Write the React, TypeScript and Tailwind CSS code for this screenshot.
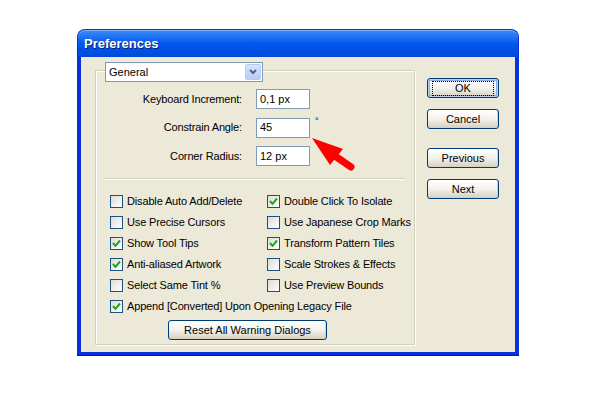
const font = { fontFamily: '"Liberation Sans", Arial, sans-serif' };

function XpButton({ label, isDefault = false, width = "w-[72px]" }: { label: string; isDefault?: boolean; width?: string }) {
  return (
    <div
      className={`${width} h-[20px] rounded-[3px] border border-[#003C74] bg-gradient-to-b from-[#FFFFFF] via-[#F3F2EC] to-[#D6D0C5] flex items-center justify-center text-[11px] text-black ${
        isDefault ? "shadow-[inset_0_0_0_1px_#B8D0F8,inset_0_0_0_2px_#89ADE4]" : "shadow-[inset_-1px_-1px_0_#D8D2BD]"
      }`}
    >
      {isDefault ? (
        <span className="px-[22px] leading-[13px] outline outline-1 outline-dotted outline-black">{label}</span>
      ) : (
        <span>{label}</span>
      )}
    </div>
  );
}

function Checkbox({ checked, label }: { checked: boolean; label: string }) {
  return (
    <div className="flex items-center h-[21px]">
      <div className="w-[13px] h-[13px] border border-[#1C5180] bg-gradient-to-br from-[#DCDCD7] to-[#FFFFFF] flex items-center justify-center shrink-0">
        {checked && (
          <svg width="9" height="9" viewBox="0 0 9 9">
            <polyline points="1,4 3.5,6.8 8,1.5" fill="none" stroke="#21A121" strokeWidth="2" />
          </svg>
        )}
      </div>
      <span className="ml-[4px] text-[11px] tracking-[-0.15px] text-black whitespace-nowrap">{label}</span>
    </div>
  );
}

function Field({ label, value, suffix }: { label: string; value: string; suffix?: string }) {
  return (
    <div className="flex items-center h-[20px]">
      <div className="w-[146px] text-right text-[11px] tracking-[-0.15px] text-black">{label}</div>
      <div className="ml-[14px] w-[54px] h-[20px] border border-[#7F9DB9] bg-white flex items-center pl-[3px] text-[11px] text-black">
        {value}
      </div>
      {suffix && <span className="ml-[5px] self-start -mt-[3px] text-[9px] text-black">{suffix}</span>}
    </div>
  );
}

export default function App() {
  const left = [
    { label: "Disable Auto Add/Delete", checked: false },
    { label: "Use Precise Cursors", checked: false },
    { label: "Show Tool Tips", checked: true },
    { label: "Anti-aliased Artwork", checked: true },
    { label: "Select Same Tint %", checked: false },
  ];
  const right = [
    { label: "Double Click To Isolate", checked: true },
    { label: "Use Japanese Crop Marks", checked: false },
    { label: "Transform Pattern Tiles", checked: true },
    { label: "Scale Strokes & Effects", checked: false },
    { label: "Use Preview Bounds", checked: false },
  ];

  return (
    <div className="relative w-[600px] h-[400px] bg-white pl-[77px] pt-[29px]" style={font}>
      <div className="w-[442px] h-[326px] flex flex-col">
        {/* title bar */}
        <div className="h-[28px] rounded-t-[8px] bg-gradient-to-b from-[#3B8CF8] via-[#0058EE] to-[#0049DA] border border-b-0 border-[#0831D9] flex items-center pl-[6px] shadow-[inset_0_1px_0_#7FB4FF]">
          <span className="text-white font-bold text-[13px] [text-shadow:1px_1px_0_#0A246A]">Preferences</span>
        </div>

        {/* body */}
        <div className="flex-1 flex bg-[#ECE9D8] border-l-[4px] border-r-[4px] border-b-[3px] border-[#0831D9] shadow-[0_1px_0_#001EA0]">
          <div className="ml-[14px] mt-[13px] w-[320px] h-[275px] border border-[#D0D0BF] shadow-[inset_1px_1px_0_#FFFFFF,1px_1px_0_#FFFFFF] flex flex-col">
            {/* dropdown */}
            <div className="ml-[9px] -mt-[9px] w-[158px] h-[20px] border border-[#7F9DB9] bg-white flex items-center">
              <span className="flex-1 pl-[3px] text-[11px] text-black">General</span>
              <div className="w-[16px] h-[16px] mr-[1px] rounded-[2px] bg-gradient-to-b from-[#D8E4FD] to-[#B5CBF7] border border-[#B9CAF0] flex items-center justify-center">
                <svg width="8" height="6" viewBox="0 0 8 6">
                  <polyline points="1,1 4,4 7,1" fill="none" stroke="#4D6185" strokeWidth="2" />
                </svg>
              </div>
            </div>

            <div className="mt-[7px] flex flex-col gap-[8.5px]">
              <Field label="Keyboard Increment:" value="0,1 px" />
              <Field label="Constrain Angle:" value="45" suffix="°" />
              <Field label="Corner Radius:" value="12 px" />
            </div>

            <div className="mt-[12px] ml-[9px] w-[299px] h-[2px] border-t border-[#D0D0BF] border-b border-b-white" />

            <div className="mt-[10.5px] ml-[14px] grid grid-cols-[157px_1fr]">
              {left.map((item, i) => (
                <>
                  <Checkbox key={`l${i}`} checked={item.checked} label={item.label} />
                  <Checkbox key={`r${i}`} checked={right[i].checked} label={right[i].label} />
                </>
              ))}
              <div className="col-span-2">
                <Checkbox checked label="Append [Converted] Upon Opening Legacy File" />
              </div>
            </div>

            <div className="mt-[3.5px] ml-[72px]">
              <XpButton label="Reset All Warning Dialogs" width="w-[159px]" />
            </div>
          </div>

          <div className="ml-[12px] mt-[21px] flex flex-col">
            <XpButton label="OK" isDefault />
            <div className="mt-[11px]">
              <XpButton label="Cancel" />
            </div>
            <div className="mt-[19px]">
              <XpButton label="Previous" />
            </div>
            <div className="mt-[11px]">
              <XpButton label="Next" />
            </div>
          </div>
        </div>
      </div>

      {/* red annotation arrow */}
      <svg className="absolute left-[300px] top-[125px]" width="70" height="60" viewBox="300 125 70 60">
        <polygon points="312,138 343,149 330,165" fill="#FF0000" />
        <line x1="335" y1="156" x2="351" y2="167" stroke="#FF0000" strokeWidth="7" strokeLinecap="round" />
      </svg>
    </div>
  );
}
